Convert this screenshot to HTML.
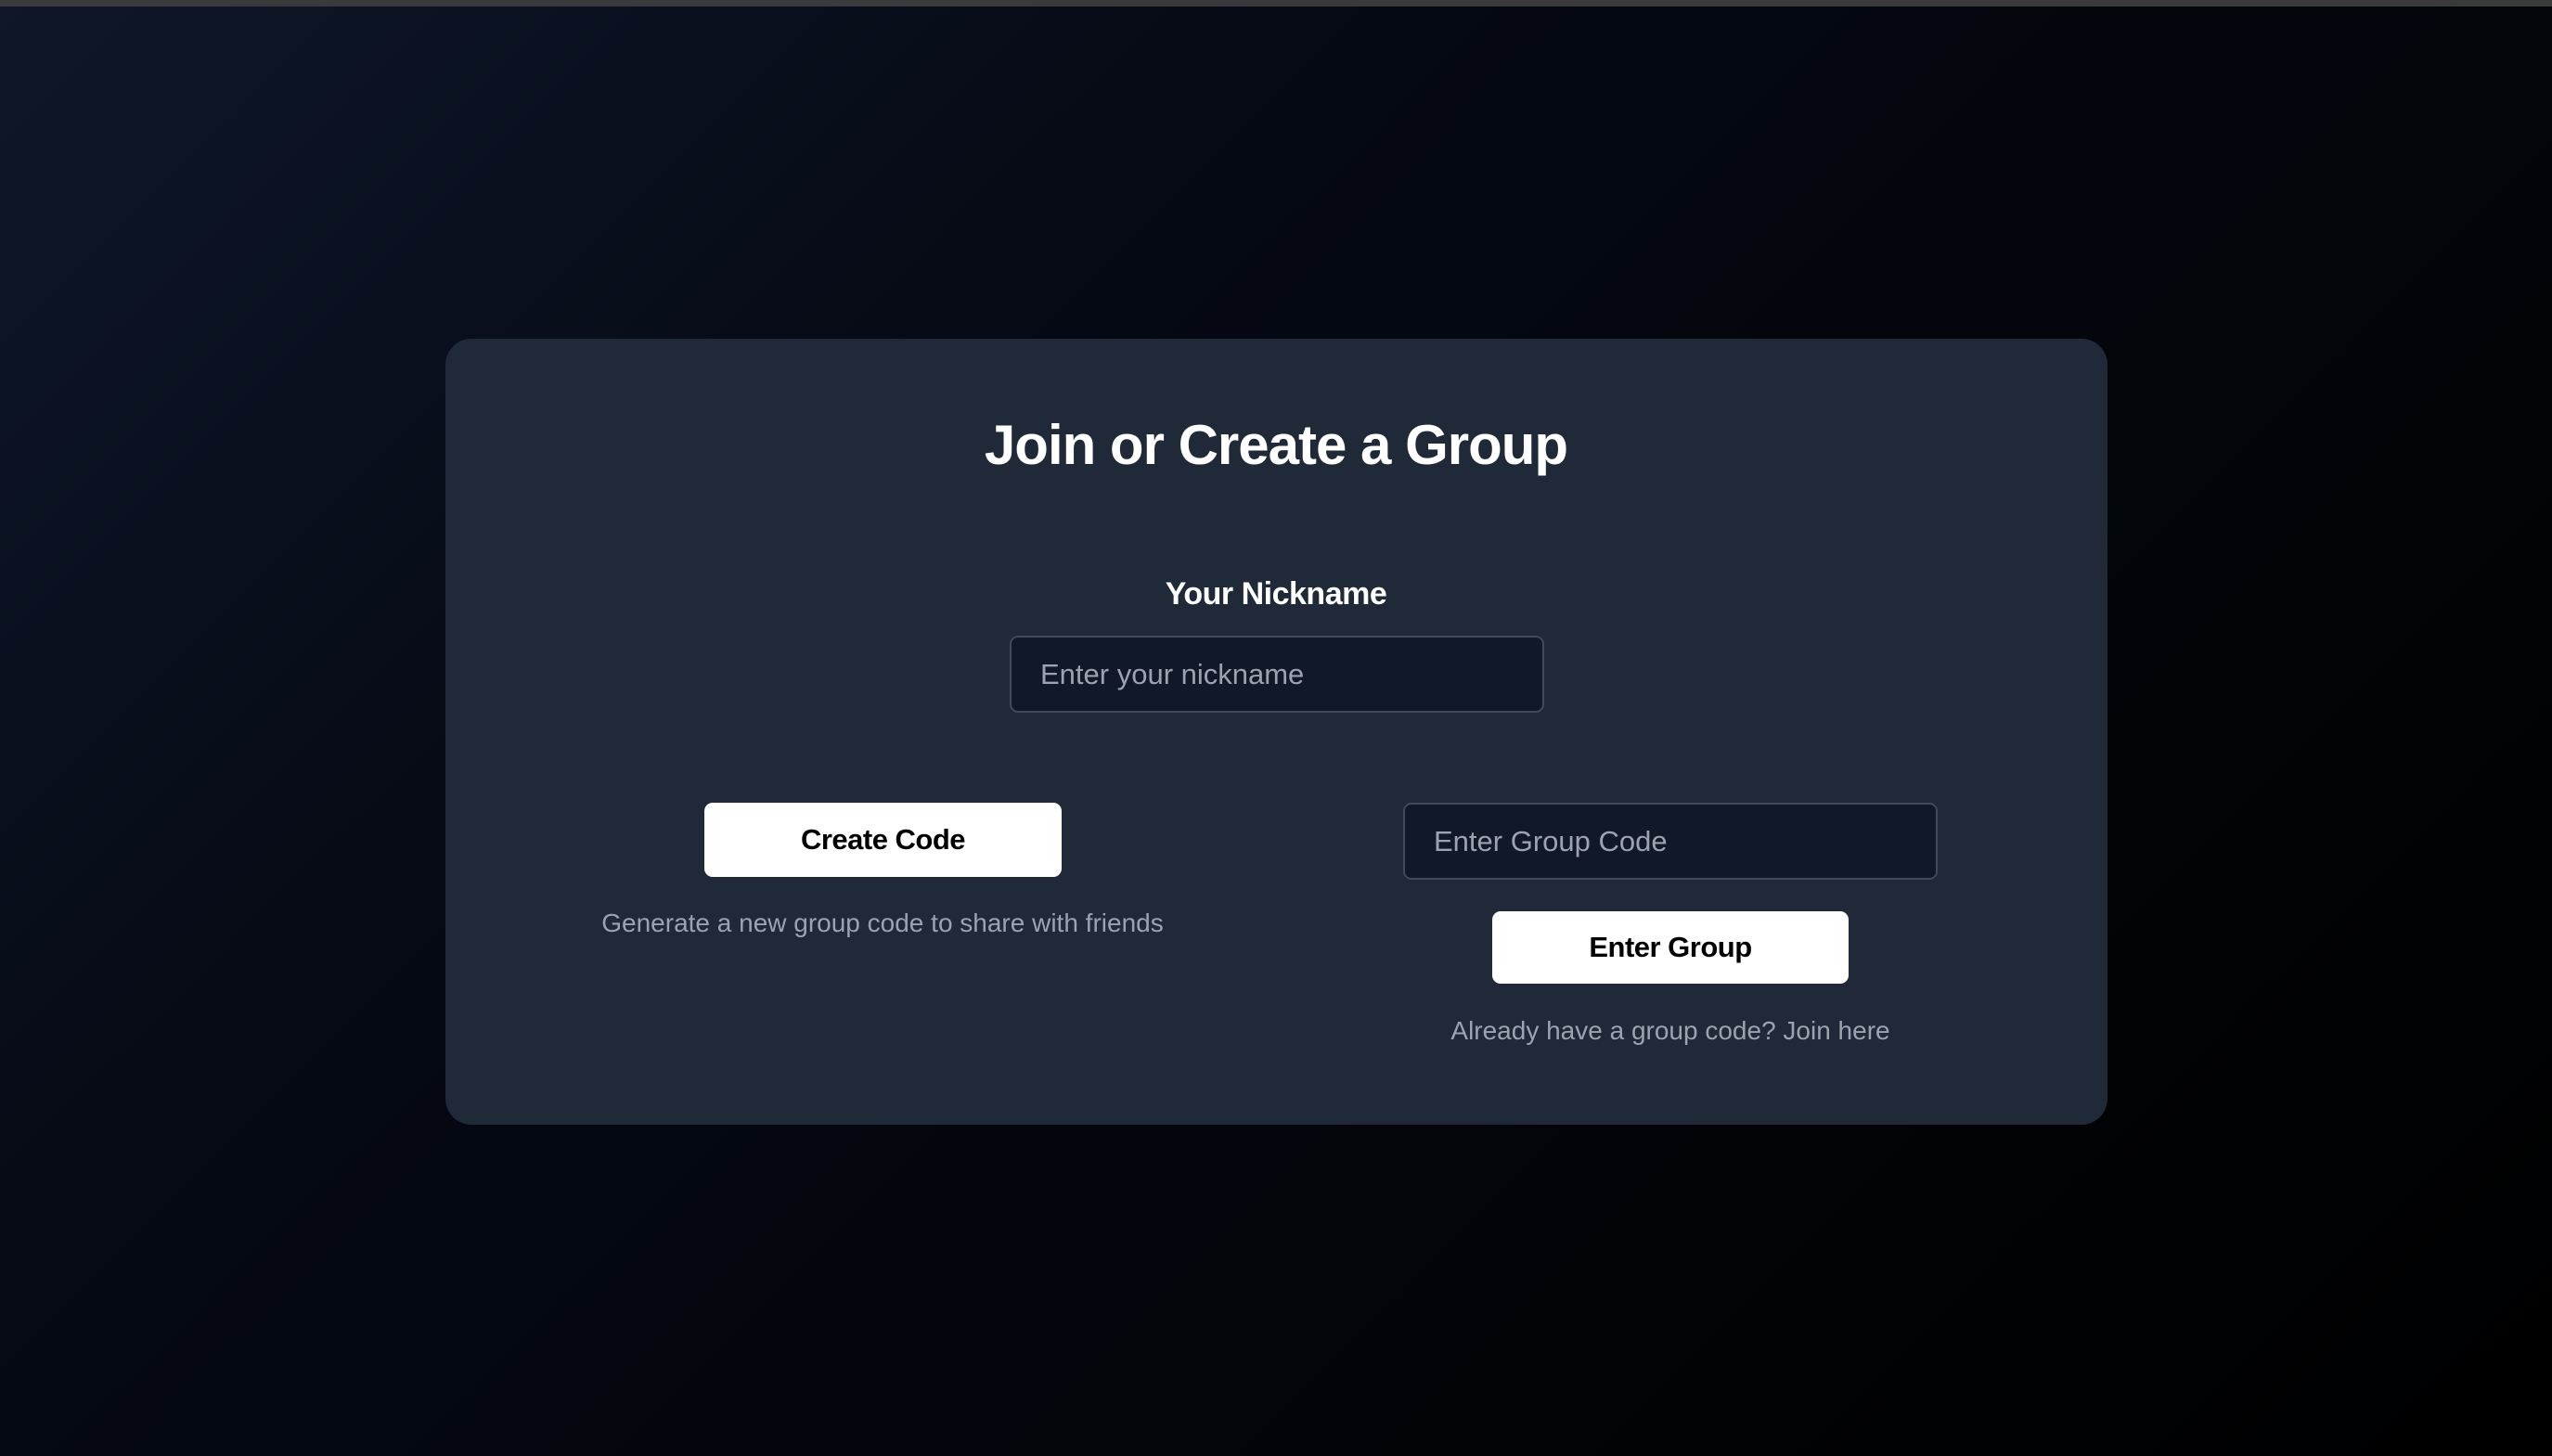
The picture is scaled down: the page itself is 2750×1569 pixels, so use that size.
<!DOCTYPE html>
<html><head><style>
html,body{margin:0;padding:0;}
body{width:2750px;height:1569px;overflow:hidden;background:linear-gradient(135deg,#0f1729 0%,#050913 35%,#000 100%);font-family:"Liberation Sans","DejaVu Sans",sans-serif;position:relative;}
.top{position:absolute;left:0;top:0;width:2750px;height:7px;background:#3a3a3c;}
.card{position:absolute;left:480px;top:365px;width:1791px;height:847px;background:#1f2937;border-radius:28px;}
.abs{position:absolute;text-align:center;}
h1{position:absolute;left:0;width:2750px;top:445px;margin:0;text-align:center;color:#fff;font-size:60px;font-weight:bold;letter-spacing:-1px;}
.label{left:0;width:2750px;top:621px;color:#fff;font-size:34px;font-weight:bold;letter-spacing:-0.5px;}
.inp{position:absolute;box-sizing:border-box;background:#111827;border:2px solid #3f4a5a;border-radius:9px;color:#9ca3af;font-size:31px;padding-left:31px;display:flex;align-items:center;}
.btn{position:absolute;background:#fff;border-radius:9px;color:#000;font-size:31px;font-weight:bold;display:flex;align-items:center;justify-content:center;letter-spacing:-0.5px;}
.hint{color:#9ca3af;font-size:28px;}
</style></head><body>
<div class="top"></div>
<div class="card"></div>
<h1>Join or Create a Group</h1>
<div class="abs label">Your Nickname</div>
<div class="inp" style="left:1088px;top:685px;width:576px;height:83px;">Enter your nickname</div>
<div class="btn" style="left:759px;top:865px;width:385px;height:80px;">Create Code</div>
<div class="abs hint" style="left:551px;width:800px;top:979px;">Generate a new group code to share with friends</div>
<div class="inp" style="left:1512px;top:865px;width:576px;height:83px;">Enter Group Code</div>
<div class="btn" style="left:1608px;top:982px;width:384px;height:78px;">Enter Group</div>
<div class="abs hint" style="left:1400px;width:800px;top:1095px;">Already have a group code? Join here</div>
</body></html>
